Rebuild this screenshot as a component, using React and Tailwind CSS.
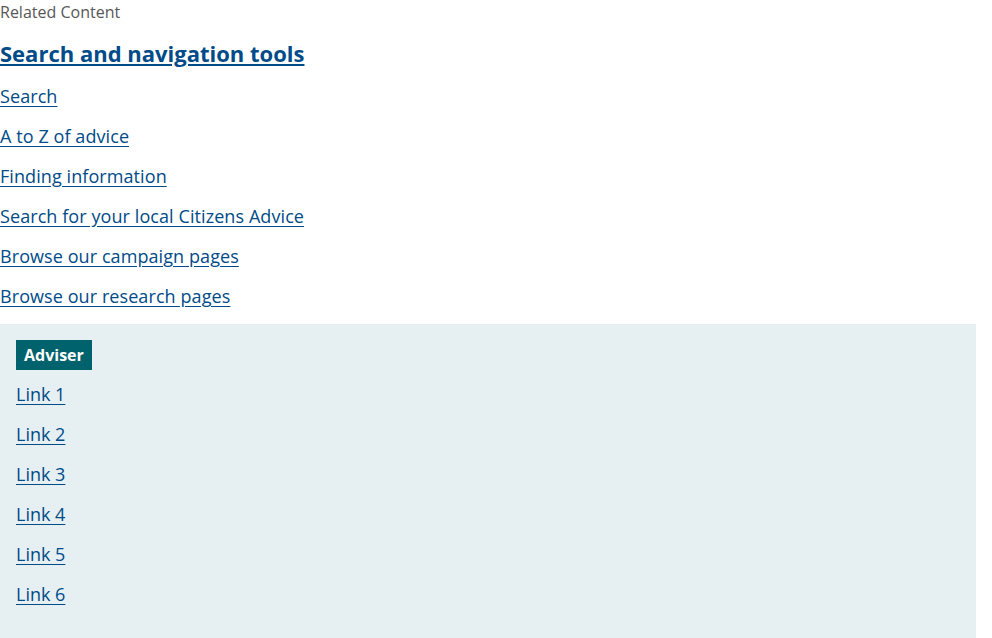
export default function App() {
  const top = [
    "Search",
    "A to Z of advice",
    "Finding information",
    "Search for your local Citizens Advice",
    "Browse our campaign pages",
    "Browse our research pages",
  ];
  const links = ["Link 1", "Link 2", "Link 3", "Link 4", "Link 5", "Link 6"];
  return (
    <div className="w-[976px] bg-white" style={{ fontFamily: '"Open Sans", sans-serif' }}>
      <div className="text-[16px] leading-6 text-[#575757]">Related Content</div>
      <h2 className="mt-[11px] text-[22px] leading-[36px] font-bold">
        <a href="#" className="text-[#004b88] underline">Search and navigation tools</a>
      </h2>
      <ul className="mt-[5px] pb-[8px]">
        {top.map((t) => (
          <li key={t} className="h-10 flex items-center text-[18px] leading-7 tracking-[0.08px]">
            <a href="#" className="text-[#004b88] underline underline-offset-[3px]">{t}</a>
          </li>
        ))}
      </ul>
      <div className="bg-[#e6eff2] px-4 pt-4 pb-[44px]">
        <span className="inline-block bg-[#00626d] text-white font-bold text-[16px] leading-[30px] px-2">Adviser</span>
        <ul className="mt-[4px]">
          {links.map((t) => (
            <li key={t} className="h-10 flex items-center text-[18px] leading-7">
              <a href="#" className="text-[#004b88] underline underline-offset-[3px]">{t}</a>
            </li>
          ))}
        </ul>
      </div>
    </div>
  );
}
